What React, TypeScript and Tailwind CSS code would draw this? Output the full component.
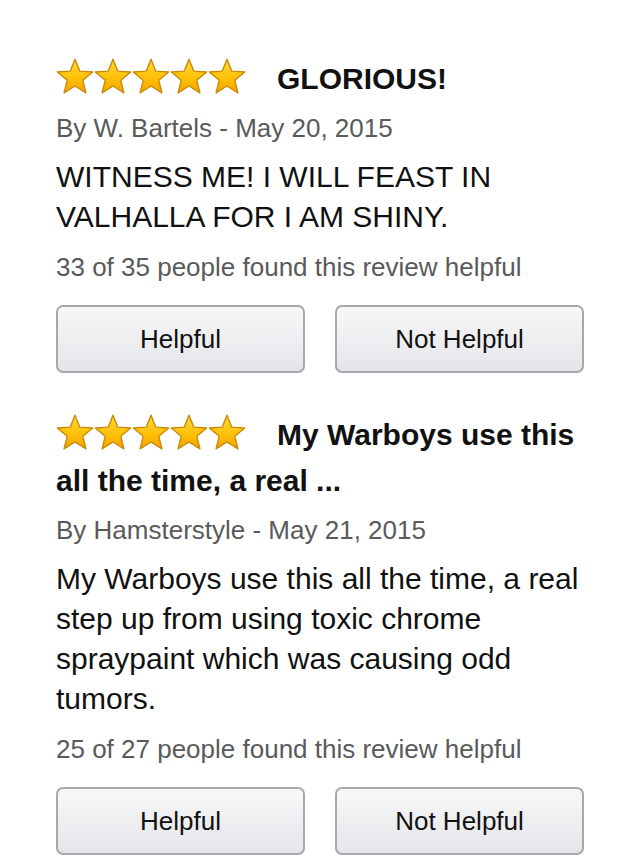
import React from "react";

function starPoints(cx: number, cy: number, R: number, r: number) {
  const pts: string[] = [];
  for (let i = 0; i < 10; i++) {
    const rad = i % 2 === 0 ? R : r;
    const a = (Math.PI / 5) * i - Math.PI / 2;
    pts.push(`${(cx + rad * Math.cos(a)).toFixed(2)},${(cy + rad * Math.sin(a)).toFixed(2)}`);
  }
  return pts.join(" ");
}

const STAR = starPoints(19, 19.8, 18.6, 8.2);

function Star({ id }: { id: string }) {
  return (
    <svg
      width="38"
      height="37"
      viewBox="0 0 38 37"
      className="inline-block align-[-6px]"
    >
      <defs>
        <linearGradient id={id} x1="0" y1="0" x2="0" y2="1">
          <stop offset="0%" stopColor="#ffd83a" />
          <stop offset="55%" stopColor="#ffc107" />
          <stop offset="100%" stopColor="#f5a300" />
        </linearGradient>
      </defs>
      <polygon
        points={STAR}
        fill={`url(#${id})`}
        stroke="#c98a06"
        strokeWidth="1.4"
        strokeLinejoin="round"
      />
    </svg>
  );
}

function Stars({ pre }: { pre: string }) {
  return (
    <span className="whitespace-nowrap mr-[31px]">
      {[0, 1, 2, 3, 4].map((i) => (
        <Star key={i} id={`${pre}-g${i}`} />
      ))}
    </span>
  );
}

function Review({
  pre,
  title,
  meta,
  body,
  helpful,
  first,
}: {
  pre: string;
  title: string;
  meta: string;
  body: string;
  helpful: string;
  first?: boolean;
}) {
  return (
    <div className={first ? "" : "mt-[39px]"}>
      <h3 className="text-[30px] leading-[46px] font-bold text-[#111111]">
        <Stars pre={pre} />
        {title}
      </h3>
      <p className="mt-[8px] text-[26px] leading-[36px] text-[#5a5a5a]">{meta}</p>
      <p className="mt-[11px] text-[30px] leading-[40px] text-[#111111]">{body}</p>
      <p className="mt-[12px] text-[26px] leading-[36px] text-[#5a5a5a]">{helpful}</p>
      <div className="mt-[20px] grid grid-cols-2 gap-[30px]">
        <button className="h-[68px] rounded-[7px] border-2 border-[#a7a8ab] bg-gradient-to-b from-[#f8f8f9] to-[#e4e5e9] text-[26px] text-[#111111]">
          Helpful
        </button>
        <button className="h-[68px] rounded-[7px] border-2 border-[#a7a8ab] bg-gradient-to-b from-[#f8f8f9] to-[#e4e5e9] text-[26px] text-[#111111]">
          Not Helpful
        </button>
      </div>
    </div>
  );
}

export default function App() {
  return (
    <div
      className="w-[640px] h-[867px] overflow-hidden bg-white px-[56px] pt-[56px]"
      style={{ fontFamily: '"Liberation Sans", Arial, sans-serif' }}
    >
      <Review
        pre="r1"
        first
        title="GLORIOUS!"
        meta="By W. Bartels - May 20, 2015"
        body="WITNESS ME! I WILL FEAST IN VALHALLA FOR I AM SHINY."
        helpful="33 of 35 people found this review helpful"
      />
      <Review
        pre="r2"
        title="My Warboys use this all the time, a real ..."
        meta="By Hamsterstyle - May 21, 2015"
        body="My Warboys use this all the time, a real step up from using toxic chrome spraypaint which was causing odd tumors."
        helpful="25 of 27 people found this review helpful"
      />
    </div>
  );
}
